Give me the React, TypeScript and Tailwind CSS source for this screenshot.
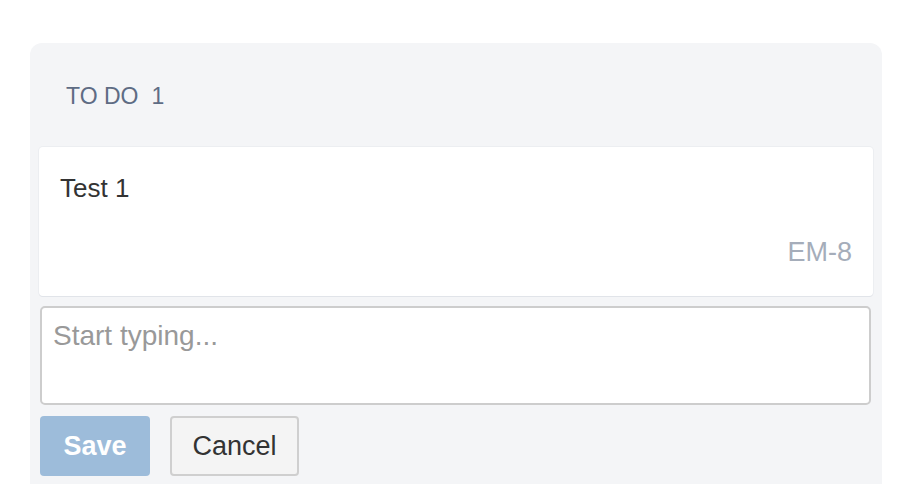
import React from "react";

export default function App() {
  return (
    <div className="min-h-screen bg-white pt-[43px] pl-[30px] font-['Liberation_Sans',Arial,sans-serif]">
      <div className="w-[852px] h-[460px] rounded-t-[12px] bg-[#f4f5f7] px-[9px]">
        {/* Column header */}
        <div className="h-[104px] flex items-center pl-[27px] pt-[2px]">
          <span className="text-[23px] leading-none uppercase text-[#5e6c84]">To Do</span>
          <span className="ml-[13px] text-[23px] leading-none text-[#5e6c84]">1</span>
        </div>

        {/* Card */}
        <div className="h-[149px] bg-white rounded-[4px] shadow-[0_1px_0_#e1e4e9,0_0_0_1px_#eceef1] px-[21px] pt-[28px] pb-[30px] flex flex-col justify-between">
          <div className="text-[26px] leading-none text-[#333]">Test 1</div>
          <div className="self-end text-[27px] leading-none text-[#a5adba]">EM-8</div>
        </div>

        {/* New card input */}
        <div className="mt-[10px] ml-[1px] mr-[2px]">
          <textarea
            placeholder="Start typing..."
            className="block w-full h-[99px] resize-none bg-white border-2 border-[#cdcdcd] rounded-[5px] px-[11px] py-[10px] text-[28px] leading-tight text-[#333] placeholder:text-[#999] outline-none"
          />
        </div>

        <div className="mt-[11px] ml-[1px] flex gap-[20px]">
          <button className="w-[110px] h-[60px] rounded-[4px] bg-[#9dbcda] text-white font-bold text-[27px]">
            Save
          </button>
          <button className="w-[129px] h-[60px] rounded-[4px] border-2 border-[#cfcfcf] bg-[#f4f4f4] text-[#333] text-[27px]">
            Cancel
          </button>
        </div>
      </div>
    </div>
  );
}
